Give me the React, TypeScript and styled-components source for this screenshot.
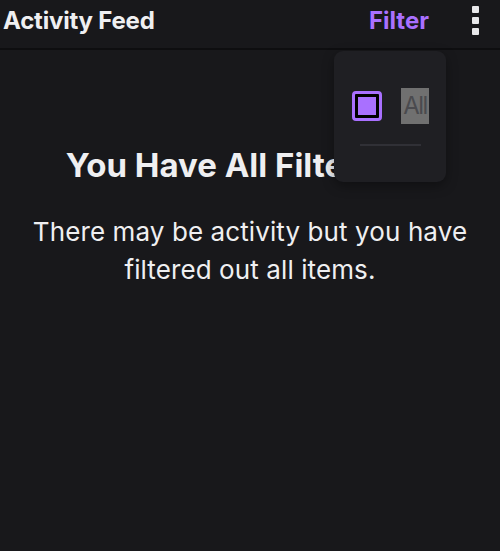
import styled, { createGlobalStyle } from "styled-components";

const GlobalStyle = createGlobalStyle`
  html, body {
    margin: 0;
    padding: 0;
    background: #18181b;
  }
  body {
    font-family: Inter, "Noto Sans", sans-serif;
    color: #efeff1;
  }
`;

const Page = styled.div`
  position: relative;
  width: 500px;
  height: 551px;
  background: #18181b;
  overflow: hidden;
`;

const Header = styled.header`
  display: flex;
  align-items: center;
  height: 50px;
  box-sizing: border-box;
  padding: 0 21px 7px 3px;
  border-bottom: 2px solid #0e0e10;
`;

const Title = styled.h1`
  flex: 1;
  margin: 0;
  font-size: 24px;
  font-weight: 700;
  letter-spacing: -0.2px;
  color: #efeff1;
`;

const FilterButton = styled.button`
  background: none;
  border: 0;
  padding: 0;
  margin-right: 43px;
  font-family: inherit;
  font-size: 24px;
  font-weight: 700;
  color: #a970ff;
`;

const MoreDots = styled.div`
  display: flex;
  flex-direction: column;
  gap: 4px;
  span {
    width: 7px;
    height: 7px;
    border-radius: 1px;
    background: #e8e8ea;
  }
`;

const Empty = styled.div`
  display: flex;
  flex-direction: column;
  align-items: center;
  padding: 95px 10px 0;
  text-align: center;
`;

const Heading = styled.h2`
  margin: 0 0 28px;
  font-size: 33px;
  line-height: 40px;
  font-weight: 700;
  white-space: nowrap;
  color: #efeff1;
`;

const Body = styled.p`
  margin: 0;
  font-size: 26px;
  line-height: 38px;
  letter-spacing: 0.1px;
  color: #efeff1;
`;

const Menu = styled.div`
  position: absolute;
  left: 334px;
  top: 51px;
  width: 112px;
  height: 131px;
  box-sizing: border-box;
  padding: 37px 17px 0 18px;
  background: #1f1f23;
  border-radius: 9px;
  box-shadow: 0 4px 12px rgba(0, 0, 0, 0.35);
`;

const Option = styled.div`
  display: flex;
  align-items: center;
  gap: 19px;
`;

const Check = styled.div`
  width: 30px;
  height: 30px;
  box-sizing: border-box;
  border: 3px solid #a970ff;
  border-radius: 4px;
  background: #000;
  padding: 3px;
  div {
    width: 100%;
    height: 100%;
    background: #a970ff;
  }
`;

const OptionLabel = styled.span`
  width: 28px;
  font-size: 24px;
  line-height: 36px;
  letter-spacing: -1.5px;
  text-align: center;
  background: #707070;
  color: #4a4a4e;
`;

const Divider = styled.div`
  margin: 20px 8px 0 8px;
  height: 2px;
  background: #303036;
`;

export default function App() {
  return (
    <Page>
      <GlobalStyle />
      <Header>
        <Title>Activity Feed</Title>
        <FilterButton>Filter</FilterButton>
        <MoreDots>
          <span />
          <span />
          <span />
        </MoreDots>
      </Header>
      <Empty>
        <Heading>You Have All Filters Off</Heading>
        <Body>
          There may be activity but you have
          <br />
          filtered out all items.
        </Body>
      </Empty>
      <Menu>
        <Option>
          <Check>
            <div />
          </Check>
          <OptionLabel>All</OptionLabel>
        </Option>
        <Divider />
      </Menu>
    </Page>
  );
}
